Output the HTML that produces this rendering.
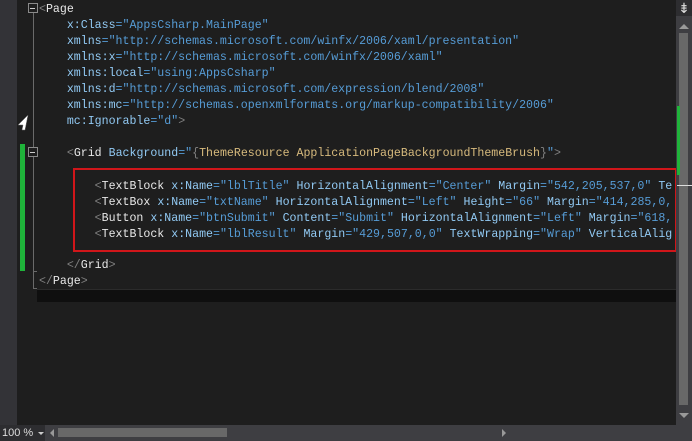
<!DOCTYPE html>
<html><head><style>
body{margin:0;width:692px;height:441px;background:#1e1e1e;position:relative;overflow:hidden;font-family:"Liberation Mono",monospace;}
.a{position:absolute}
.l{position:absolute;left:39px;font-size:11.6px;line-height:16px;white-space:pre;color:#d4d4d4;margin-top:2px}
.b{color:#808080}.e{color:#e8e8e8}.n{color:#92caf4}.v{color:#569cd6}.t{color:#d7ba7d}
</style></head><body>
<div class="a" style="left:0;top:0;width:17px;height:425px;background:#333337"></div>
<div class="a" style="left:33px;top:12px;width:1px;height:259px;background:#6a6a6a"></div>
<div class="a" style="left:33px;top:271px;width:4px;height:1px;background:#6a6a6a"></div>
<div class="a" style="left:33px;top:272px;width:1px;height:16px;background:#6a6a6a"></div>
<div class="a" style="left:33px;top:288px;width:4px;height:1px;background:#6a6a6a"></div>
<div class="a" style="left:28px;top:3px;width:8px;height:8px;border:1px solid #8a8a8a;background:#1e1e1e"></div>
<div class="a" style="left:30px;top:8px;width:5px;height:1px;background:#ccc"></div>
<div class="a" style="left:28px;top:147px;width:8px;height:8px;border:1px solid #8a8a8a;background:#1e1e1e"></div>
<div class="a" style="left:30px;top:152px;width:5px;height:1px;background:#ccc"></div>
<div class="a" style="left:20px;top:144px;width:5px;height:127px;background:#1fb33a"></div>
<svg class="a" style="left:16px;top:114px" width="14" height="18"><path d="M12 1 L2 11 L7 11 L6 16 L9 16 L10 11 Z" fill="#fff" stroke="#666" stroke-width=".5"/></svg>
<div class="l" style="top:0"><span class="b">&lt;</span><span class="e">Page</span></div>
<div class="l" style="top:16px">    <span class="n">x:Class</span><span class="v">="AppsCsharp.MainPage"</span></div>
<div class="l" style="top:32px">    <span class="n">xmlns</span><span class="v">="http://schemas.microsoft.com/winfx/2006/xaml/presentation"</span></div>
<div class="l" style="top:48px">    <span class="n">xmlns:x</span><span class="v">="http://schemas.microsoft.com/winfx/2006/xaml"</span></div>
<div class="l" style="top:64px">    <span class="n">xmlns:local</span><span class="v">="using:AppsCsharp"</span></div>
<div class="l" style="top:80px">    <span class="n">xmlns:d</span><span class="v">="http://schemas.microsoft.com/expression/blend/2008"</span></div>
<div class="l" style="top:96px">    <span class="n">xmlns:mc</span><span class="v">="http://schemas.openxmlformats.org/markup-compatibility/2006"</span></div>
<div class="l" style="top:112px">    <span class="n">mc:Ignorable</span><span class="v">="d"</span><span class="b">&gt;</span></div>
<div class="l" style="top:144px">    <span class="b">&lt;</span><span class="e">Grid</span> <span class="n">Background</span><span class="v">="</span><span class="b">{</span><span class="t">ThemeResource ApplicationPageBackgroundThemeBrush</span><span class="b">}</span><span class="v">"</span><span class="b">&gt;</span></div>
<div class="l" style="top:177px">        <span class="b">&lt;</span><span class="e">TextBlock</span> <span class="n">x:Name</span><span class="v">="lblTitle"</span> <span class="n">HorizontalAlignment</span><span class="v">="Center"</span> <span class="n">Margin</span><span class="v">="542,205,537,0"</span> <span class="n">Te</span></div>
<div class="l" style="top:193px">        <span class="b">&lt;</span><span class="e">TextBox</span> <span class="n">x:Name</span><span class="v">="txtName"</span> <span class="n">HorizontalAlignment</span><span class="v">="Left"</span> <span class="n">Height</span><span class="v">="66"</span> <span class="n">Margin</span><span class="v">="414,285,0,</span></div>
<div class="l" style="top:209px">        <span class="b">&lt;</span><span class="e">Button</span> <span class="n">x:Name</span><span class="v">="btnSubmit"</span> <span class="n">Content</span><span class="v">="Submit"</span> <span class="n">HorizontalAlignment</span><span class="v">="Left"</span> <span class="n">Margin</span><span class="v">="618,</span></div>
<div class="l" style="top:225px">        <span class="b">&lt;</span><span class="e">TextBlock</span> <span class="n">x:Name</span><span class="v">="lblResult"</span> <span class="n">Margin</span><span class="v">="429,507,0,0"</span> <span class="n">TextWrapping</span><span class="v">="Wrap"</span> <span class="n">VerticalAlig</span></div>
<div class="l" style="top:256px">    <span class="b">&lt;/</span><span class="e">Grid</span><span class="b">&gt;</span></div>
<div class="l" style="top:272px"><span class="b">&lt;/</span><span class="e">Page</span><span class="b">&gt;</span></div>
<div class="a" style="left:73px;top:168px;width:600px;height:80px;border:2px solid #d0161a"></div>
<div class="a" style="left:37px;top:289px;width:639px;height:12px;background:#0f0f0f;border-top:1px solid #2b2b2b"></div>
<div class="a" style="left:676px;top:0;width:16px;height:425px;background:#3e3e42"></div>
<div class="a" style="left:676px;top:0;width:16px;height:16px;background:#2d2d30;color:#ddd;font:14px 'Liberation Sans';text-align:center;line-height:16px">⇟</div>
<div class="a" style="left:679px;top:24px;width:0;height:0;border-left:5px solid transparent;border-right:5px solid transparent;border-bottom:5px solid #999"></div>
<div class="a" style="left:679px;top:33px;width:9px;height:372px;background:#686868"></div>
<div class="a" style="left:677px;top:106px;width:3px;height:69px;background:#1fb33a"></div>
<div class="a" style="left:677px;top:185px;width:15px;height:1px;background:#ddd"></div>
<div class="a" style="left:679px;top:413px;width:0;height:0;border-left:5px solid transparent;border-right:5px solid transparent;border-top:5px solid #999"></div>
<div class="a" style="left:0;top:425px;width:692px;height:16px;background:#3e3e42"></div>
<div class="a" style="left:0;top:425px;width:45px;height:16px;background:#2d2d30;color:#ddd;font:11px 'Liberation Sans';line-height:16px;padding-left:2px;box-sizing:border-box">100 %</div>
<div class="a" style="left:38px;top:432px;width:0;height:0;border-left:3px solid transparent;border-right:3px solid transparent;border-top:3px solid #ccc"></div>
<div class="a" style="left:50px;top:429px;width:0;height:0;border-top:4px solid transparent;border-bottom:4px solid transparent;border-right:4px solid #999"></div>
<div class="a" style="left:58px;top:428px;width:169px;height:9px;background:#686868"></div>
<div class="a" style="left:502px;top:429px;width:0;height:0;border-top:4px solid transparent;border-bottom:4px solid transparent;border-left:4px solid #999"></div>
</body></html>
